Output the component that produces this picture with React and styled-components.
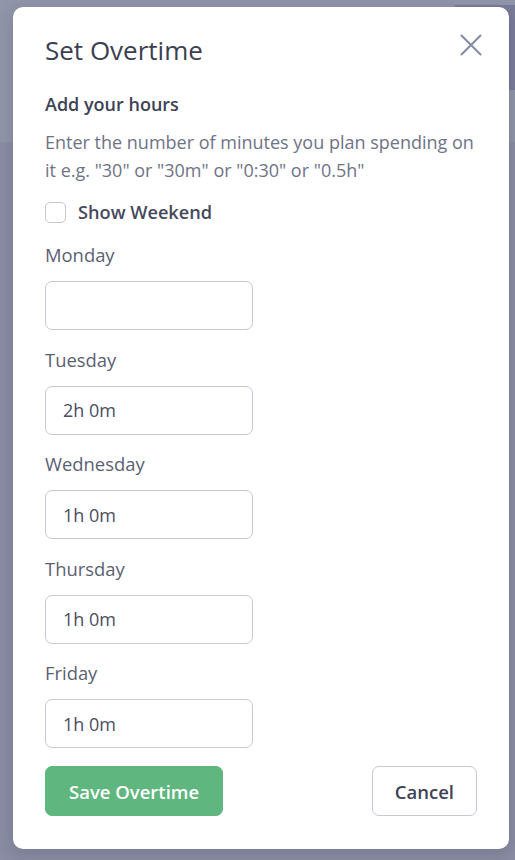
import React, { useState } from 'react';
import styled, { createGlobalStyle } from 'styled-components';

const GlobalStyle = createGlobalStyle`
  html, body {
    margin: 0;
    padding: 0;
    height: 100%;
  }
  body {
    /* dimmed page behind the modal */
    background:
      linear-gradient(#7a7b98, #7a7b98) 455px 5px / 60px 85px no-repeat,
      linear-gradient(#9195a9, #9195a9) 0 0 / 100% 142px no-repeat,
      #898ca2;
    font-family: 'Open Sans', 'Noto Sans', sans-serif;
  }
`;

const Overlay = styled.div`
  min-height: 860px;
  padding: 7px 6px 12px 13px;
  box-sizing: border-box;
`;

const Modal = styled.div`
  width: 496px;
  box-sizing: border-box;
  background: #fff;
  border-radius: 10px;
  padding: 27px 32px 33px;
  box-shadow: 0 4px 16px rgba(40, 42, 70, 0.2);
`;

const Header = styled.div`
  display: flex;
  justify-content: space-between;
  align-items: center;
  height: 32px;
`;

const Title = styled.h2`
  margin: 0;
  font-size: 26px;
  line-height: 32px;
  font-weight: 500;
  color: #3b3f51;
`;

const CloseButton = styled.button`
  align-self: flex-start;
  border: 0;
  background: none;
  padding: 0;
  margin-right: -5px;
  display: flex;
  cursor: pointer;
  color: #878ca6;
`;

const Subtitle = styled.h3`
  margin: 26px 0 0;
  font-size: 18px;
  line-height: 24px;
  font-weight: 600;
  color: #3e4256;
`;

const Hint = styled.p`
  margin: 12px 0 0;
  font-size: 18px;
  line-height: 28px;
  color: #6f7386;
`;

const CheckRow = styled.label`
  margin-top: 16px;
  display: flex;
  align-items: center;
  gap: 12px;
  height: 24px;
  font-size: 18.2px;
  font-weight: 600;
  color: #464a5d;
  cursor: pointer;
`;

const Box = styled.span`
  width: 21px;
  height: 21px;
  box-sizing: border-box;
  border: 1px solid #c8c6d8;
  border-radius: 5px;
  background: ${(p) => (p.checked ? '#5fb67e' : '#fff')};
`;

const Days = styled.div`
  margin-top: 19px;
  display: flex;
  flex-direction: column;
  gap: 17.5px;
`;

const Field = styled.div`
  display: flex;
  flex-direction: column;
  gap: 14px;
`;

const Label = styled.label`
  font-size: 18.4px;
  line-height: 24px;
  color: #5b5f72;
`;

const Input = styled.input`
  width: 208px;
  height: 49px;
  box-sizing: border-box;
  border: 1px solid #c9c6da;
  border-radius: 7px;
  padding: 0 17px;
  font-family: inherit;
  font-size: 18px;
  color: #4a4e61;
  outline: none;
`;

const Footer = styled.div`
  margin-top: 18px;
  display: flex;
  justify-content: space-between;
`;

const Button = styled.button`
  height: 50px;
  box-sizing: border-box;
  border-radius: 7px;
  font-family: inherit;
  font-size: 18.5px;
  font-weight: 600;
  cursor: pointer;
  padding: 0 ${(p) => (p.primary ? '23px' : '22px')};
  border: 1px solid ${(p) => (p.primary ? '#5fb67e' : '#c9c6da')};
  background: ${(p) => (p.primary ? '#5fb67e' : '#fff')};
  color: ${(p) => (p.primary ? '#fff' : '#3e4256')};
`;

const days = [
  { name: 'Monday', value: '' },
  { name: 'Tuesday', value: '2h 0m' },
  { name: 'Wednesday', value: '1h 0m' },
  { name: 'Thursday', value: '1h 0m' },
  { name: 'Friday', value: '1h 0m' },
];

export default function App() {
  const [weekend, setWeekend] = useState(false);
  const [values, setValues] = useState(days.map((d) => d.value));

  return (
    <>
      <GlobalStyle />
      <Overlay>
        <Modal>
          <Header>
            <Title>Set Overtime</Title>
            <CloseButton aria-label="Close">
              <svg width="22" height="22" viewBox="0 0 22 22" fill="none" stroke="currentColor" strokeWidth="2.1" strokeLinecap="round">
                <path d="M1.5 1.5L20.5 20.5M20.5 1.5L1.5 20.5" />
              </svg>
            </CloseButton>
          </Header>
          <Subtitle>Add your hours</Subtitle>
          <Hint>
            Enter the number of minutes you plan spending on it e.g. "30" or "30m" or "0:30" or "0.5h"
          </Hint>
          <CheckRow onClick={() => setWeekend(!weekend)}>
            <Box checked={weekend} />
            Show Weekend
          </CheckRow>
          <Days>
            {days.map((d, i) => (
              <Field key={d.name}>
                <Label>{d.name}</Label>
                <Input
                  value={values[i]}
                  onChange={(e) => {
                    const next = [...values];
                    next[i] = e.target.value;
                    setValues(next);
                  }}
                />
              </Field>
            ))}
          </Days>
          <Footer>
            <Button primary>Save Overtime</Button>
            <Button>Cancel</Button>
          </Footer>
        </Modal>
      </Overlay>
    </>
  );
}
